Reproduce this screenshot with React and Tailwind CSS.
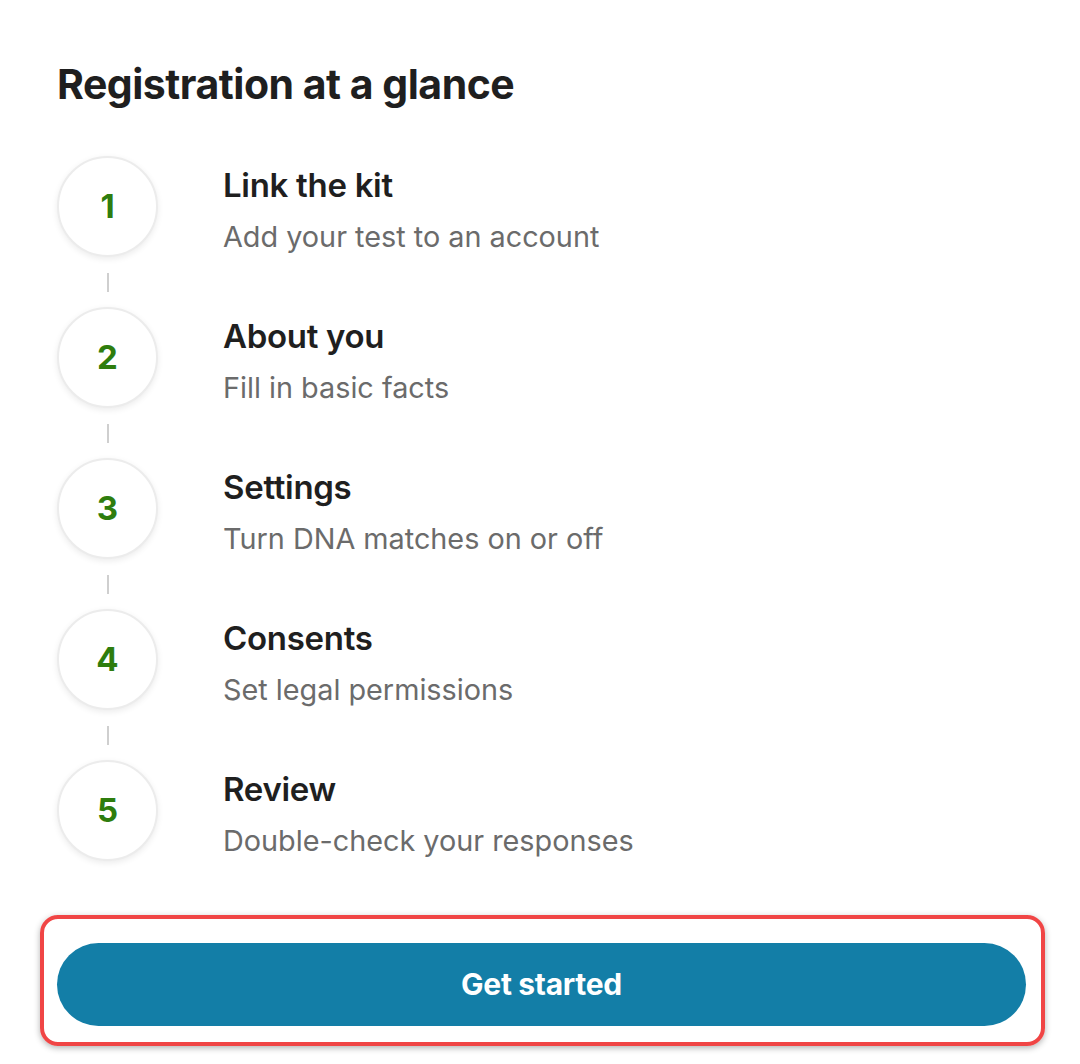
import React from "react";

const steps = [
  { n: 1, title: "Link the kit", desc: "Add your test to an account" },
  { n: 2, title: "About you", desc: "Fill in basic facts" },
  { n: 3, title: "Settings", desc: "Turn DNA matches on or off" },
  { n: 4, title: "Consents", desc: "Set legal permissions" },
  { n: 5, title: "Review", desc: "Double-check your responses" },
];

const Step = ({ n, title, desc, last }) => {
  return (
    <div className="flex">
      <div className="flex flex-col items-center w-[101px]">
        <div className="w-[101px] h-[101px] rounded-full bg-white border-2 border-[#ececec] shadow-[0_2px_6px_rgba(0,0,0,0.08)] flex items-center justify-center">
          <span className="text-[33px] font-bold text-[#2e7d0e] leading-none">{n}</span>
        </div>
        {!last && (
          <div className="h-[50px] flex items-center">
            <div className="w-[2px] h-[19px] bg-[#cfcfcf]"></div>
          </div>
        )}
      </div>
      <div className="ml-[65px] pt-[9px]">
        <h3 className="text-[33px] font-semibold text-[#1f1f1f] leading-[40px] tracking-[-0.3px]">{title}</h3>
        <p className="mt-[15px] text-[28.8px] text-[#6b6b6b] leading-[34px]">{desc}</p>
      </div>
    </div>
  );
};

export default function App() {
  return (
    <div
      className="w-[1080px] h-[1064px] bg-white pt-[60px] pl-[57px] pr-[54px] overflow-hidden"
      style={{ fontFamily: "Inter, 'Liberation Sans', sans-serif" }}
    >
      <h2 className="text-[41px] font-bold text-[#1f1f1f] leading-[48px] tracking-[-0.5px]">
        Registration at a glance
      </h2>

      <div className="mt-[48px] flex flex-col">
        {steps.map((s, i) => (
          <Step key={s.n} {...s} last={i === steps.length - 1} />
        ))}
      </div>

      <div className="mt-[54px] -ml-[17px] -mr-[19px] rounded-[18px] border-4 border-[#f04545] pt-[24px] pb-[16px] pl-[13px] pr-[15px] shadow-[0_2px_6px_rgba(0,0,0,0.3)]">
        <button className="w-full h-[83px] rounded-full bg-[#137ea7] text-white text-[30px] font-bold tracking-[-0.3px]">
          Get started
        </button>
      </div>
    </div>
  );
}
